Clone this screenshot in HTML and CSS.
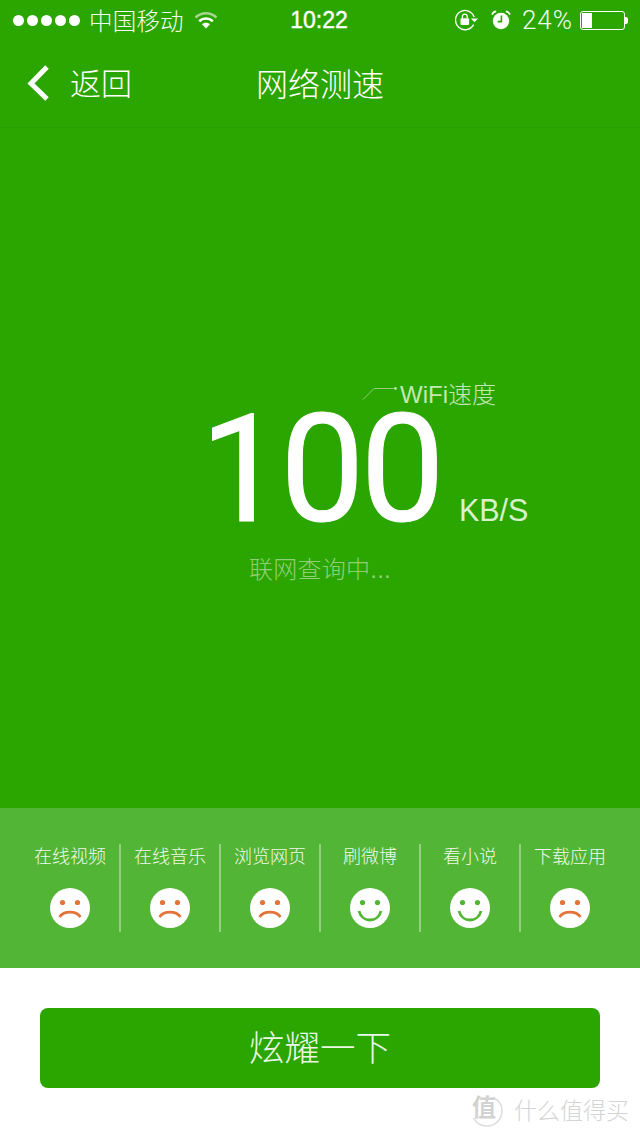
FILE: index.html
```html
<!DOCTYPE html>
<html lang="zh">
<head>
<meta charset="utf-8">
<title>网络测速</title>
<link rel="stylesheet" href="styles.css">
</head>
<body>
<div class="app">
  <header class="top">
    <div class="status">
      <div class="status-left">
        <div class="dots"><i></i><i></i><i></i><i></i><i></i></div>
        <span class="carrier">中国移动</span>
        <svg class="wifi" width="24" height="18" viewBox="0 0 24 18">
          <path d="M1.5 6.5C7.5 .9 16.5 .9 22.5 6.5" fill="none" stroke="#a5d68f" stroke-width="2.6"/>
          <path d="M5.2 10.2C9.2 6.6 14.8 6.6 18.8 10.2" fill="none" stroke="#fff" stroke-width="2.6"/>
          <path d="M8 13.2L12 17.5L16 13.2C13.6 11.2 10.4 11.2 8 13.2Z" fill="#fff"/>
        </svg>
      </div>
      <span class="clock">10:22</span>
      <div class="status-right">
        <svg class="rotlock" width="24" height="22" viewBox="0 0 24 22">
          <path d="M18.6 15.6A9.6 9.6 0 1 1 19.2 8" fill="none" stroke="#fff" stroke-width="1.3"/>
          <path d="M16 9.6H23L19.5 13.2Z" fill="#fff"/>
          <rect x="5.5" y="9.2" width="8.6" height="6.8" rx="1" fill="#fff"/>
          <path d="M7.4 9.5V7.6a2.4 2.4 0 0 1 4.8 0V9.5" fill="none" stroke="#fff" stroke-width="1.3"/>
        </svg>
        <svg class="alarm" width="20" height="20" viewBox="0 0 20 20">
          <circle cx="10" cy="11" r="8.2" fill="#fff"/>
          <path d="M1 4.6C1.8 2.6 3.2 1.6 5.2 1.4M19 4.6C18.2 2.6 16.8 1.6 14.8 1.4" fill="none" stroke="#fff" stroke-width="1.6"/>
          <path d="M10.4 5.6V11.6H6.6" fill="none" stroke="#2ba500" stroke-width="1.6"/>
        </svg>
        <span class="percent">24%</span>
        <div class="battery"><div class="battery-level"></div></div>
        <div class="battery-tip"></div>
      </div>
    </div>
    <nav class="nav">
      <div class="back">
        <svg class="chevron" width="24" height="38" viewBox="0 0 24 38">
          <path d="M21 3L5 19.5L21 35" fill="none" stroke="#fff" stroke-width="5"/>
        </svg>
        <span class="back-text">返回</span>
      </div>
      <h1 class="title">网络测速</h1>
    </nav>
  </header>

  <main class="gauge">
    <div class="reading">
      <div class="wifi-label">
        <svg class="leader" width="36" height="14" viewBox="0 0 36 14">
          <path d="M1 13.5L12 2.5H33" fill="none" stroke="#8fd077" stroke-width="1"/>
          <circle cx="33.5" cy="2.5" r="1.4" fill="#b5e2a3"/>
        </svg>
        <span>WiFi速度</span>
      </div>
      <div class="value-row">
        <span class="value">100</span>
        <span class="unit">KB/S</span>
      </div>
      <p class="hint">联网查询中...</p>
    </div>
  </main>

  <section class="stats">
    <div class="stat">
      <span class="stat-name">在线视频</span>
      <svg class="face" viewBox="0 0 40 40"><use href="#sad"/></svg>
    </div>
    <div class="stat">
      <span class="stat-name">在线音乐</span>
      <svg class="face" viewBox="0 0 40 40"><use href="#sad"/></svg>
    </div>
    <div class="stat">
      <span class="stat-name">浏览网页</span>
      <svg class="face" viewBox="0 0 40 40"><use href="#sad"/></svg>
    </div>
    <div class="stat">
      <span class="stat-name">刷微博</span>
      <svg class="face" viewBox="0 0 40 40"><use href="#happy"/></svg>
    </div>
    <div class="stat">
      <span class="stat-name">看小说</span>
      <svg class="face" viewBox="0 0 40 40"><use href="#happy"/></svg>
    </div>
    <div class="stat">
      <span class="stat-name">下载应用</span>
      <svg class="face" viewBox="0 0 40 40"><use href="#sad"/></svg>
    </div>
  </section>

  <footer class="bottom">
    <button class="share">炫耀一下</button>
  </footer>

  <div class="watermark">
    <svg width="34" height="34" viewBox="0 0 34 34">
      <path d="M23 3.5C29 6 32 11 32 17C32 25 25.500 32 17 32C11 32 6 29 3.500 24" fill="none" stroke="#dcdcdc" stroke-width="1.500"/>
    </svg>
    <span class="wm-seal">值</span>
    <span class="wm-text">什么值得买</span>
  </div>
</div>

<svg class="defs" width="0" height="0">
  <defs>
    <g id="sad">
      <circle cx="20" cy="20" r="20" fill="#fff"/>
      <circle cx="12.500" cy="14.500" r="2.600" fill="#e2743a"/>
      <circle cx="27.500" cy="14.500" r="2.600" fill="#e2743a"/>
      <path d="M9.500 29C14 22.500 26 22.500 30.500 29" fill="none" stroke="#e2743a" stroke-width="2.800"/>
    </g>
    <g id="happy">
      <circle cx="20" cy="20" r="20" fill="#fff"/>
      <circle cx="12.500" cy="14.500" r="2.600" fill="#53b535"/>
      <circle cx="27.500" cy="14.500" r="2.600" fill="#53b535"/>
      <path d="M9 23C12 35 28 35 31 23" fill="none" stroke="#53b535" stroke-width="2.800"/>
    </g>
  </defs>
</svg>
</body>
</html>
```

FILE: styles.css
```css
* { box-sizing: border-box; }
html, body { margin: 0; padding: 0; }
body {
  background: #fff;
  font-family: "Liberation Sans", "Noto Sans CJK SC", sans-serif;
  color: #fff;
}
.app {
  position: relative;
  width: 640px;
  height: 1136px;
  overflow: hidden;
  display: flex;
  flex-direction: column;
}
.defs { position: absolute; }

.top {
  height: 128px;
  background: #2ba500;
  border-bottom: 1px solid #2a9f02;
  display: flex;
  flex-direction: column;
}
.status {
  height: 40px;
  padding: 0 12px 0 13px;
  display: flex;
  align-items: center;
  position: relative;
}
.status-left { display: flex; align-items: center; }
.dots { display: flex; gap: 3px; }
.dots i { width: 11px; height: 11px; border-radius: 50%; background: #fff; display: block; }
.carrier {
  margin-left: 9px;
  font-size: 23.5px;
  font-weight: 300;
  letter-spacing: 0.2px;
  color: #f4fcf0;
}
.wifi { margin-left: 10px; }
.clock {
  position: absolute;
  left: 0;
  right: 2px;
  text-align: center;
  font-size: 23px;
  font-weight: 400;
  -webkit-text-stroke: 0.4px #fff;
}
.status-right { margin-left: auto; display: flex; align-items: center; }
.alarm { margin-left: 12px; }
.percent {
  margin-left: 11px;
  font-family: Roboto, "Liberation Sans", sans-serif;
  font-size: 26px;
  font-weight: 300;
  letter-spacing: 1px;
  color: #f2fbee;
}
.battery {
  margin-left: 7px;
  width: 45px;
  height: 19px;
  border: 1px solid #fff;
  border-radius: 3px;
  padding: 1px;
}
.battery-level { width: 10px; height: 100%; background: #fff; }
.battery-tip { width: 3px; height: 7px; background: #fff; border-radius: 0 2px 2px 0; }

.nav {
  flex: 1;
  position: relative;
  display: flex;
  align-items: center;
  justify-content: center;
  padding-top: 3px;
}
.back {
  position: absolute;
  left: 26px;
  top: 0;
  bottom: 0;
  display: flex;
  align-items: center;
  gap: 20px;
}
.chevron { margin-bottom: 2px; }
.back-text { font-size: 31px; font-weight: 300; line-height: 36px; margin-top: 2px; }
.title { margin: 0; font-size: 32px; font-weight: 300; line-height: 1; }

.gauge {
  height: 680px;
  background: #2ba500;
  display: flex;
  justify-content: center;
  padding: 247px 0 0 90px;
}
.reading { position: relative; width: 350px; height: 220px; }
.wifi-label {
  position: absolute;
  left: 172px;
  top: 0;
  display: flex;
  align-items: center;
  font-size: 24px;
  color: #c2e8b3;
  white-space: nowrap;
  font-weight: 300;
}
.leader { margin-right: 2px; }
.value-row {
  position: absolute;
  left: 10px;
  top: 39px;
  display: flex;
  align-items: baseline;
  white-space: nowrap;
}
.value {
  font-family: Roboto, "Liberation Sans", sans-serif;
  font-size: 150px;
  line-height: 112px;
  letter-spacing: -4px;
  -webkit-text-stroke: 1px #fff;
}
.unit { margin-left: 18px; font-size: 30.5px; color: #d8f2cd; }
.hint {
  position: absolute;
  left: 59px;
  top: 175px;
  margin: 0;
  font-size: 24px;
  letter-spacing: 0.25px;
  font-weight: 300;
  color: #8fd077;
  white-space: nowrap;
}

.stats {
  height: 160px;
  background: #53b535;
  padding: 36px 21px 36px 19px;
  display: flex;
}
.stat {
  flex: 1;
  border-left: 2px solid #93d07f;
  display: flex;
  flex-direction: column;
  align-items: center;
}
.stat:first-child { border-left-color: transparent; }
.stat-name {
  font-size: 18px;
  line-height: 26px;
  font-weight: 300;
  color: #eef9e9;
  white-space: nowrap;
}
.face { width: 40px; height: 40px; margin-top: 18px; }

.bottom {
  flex: 1;
  padding: 40px;
}
.share {
  display: block;
  width: 100%;
  height: 80px;
  padding: 0 0 6px;
  border: 0;
  border-radius: 8px;
  background: #2ba500;
  color: #eaf7e4;
  font-family: inherit;
  font-size: 35.5px;
  font-weight: 300;
}

.watermark {
  position: absolute;
  left: 470px;
  bottom: 8px;
  height: 34px;
  display: flex;
  align-items: center;
  color: #d4d4d4;
}
.wm-seal {
  position: absolute;
  left: 2px;
  top: 0;
  font-size: 24px;
  font-weight: 700;
  line-height: 28px;
  color: #d2d2d2;
}
.wm-text { margin-left: 10px; font-size: 23px; font-weight: 300; line-height: 1; margin-top: 1px; }
```
